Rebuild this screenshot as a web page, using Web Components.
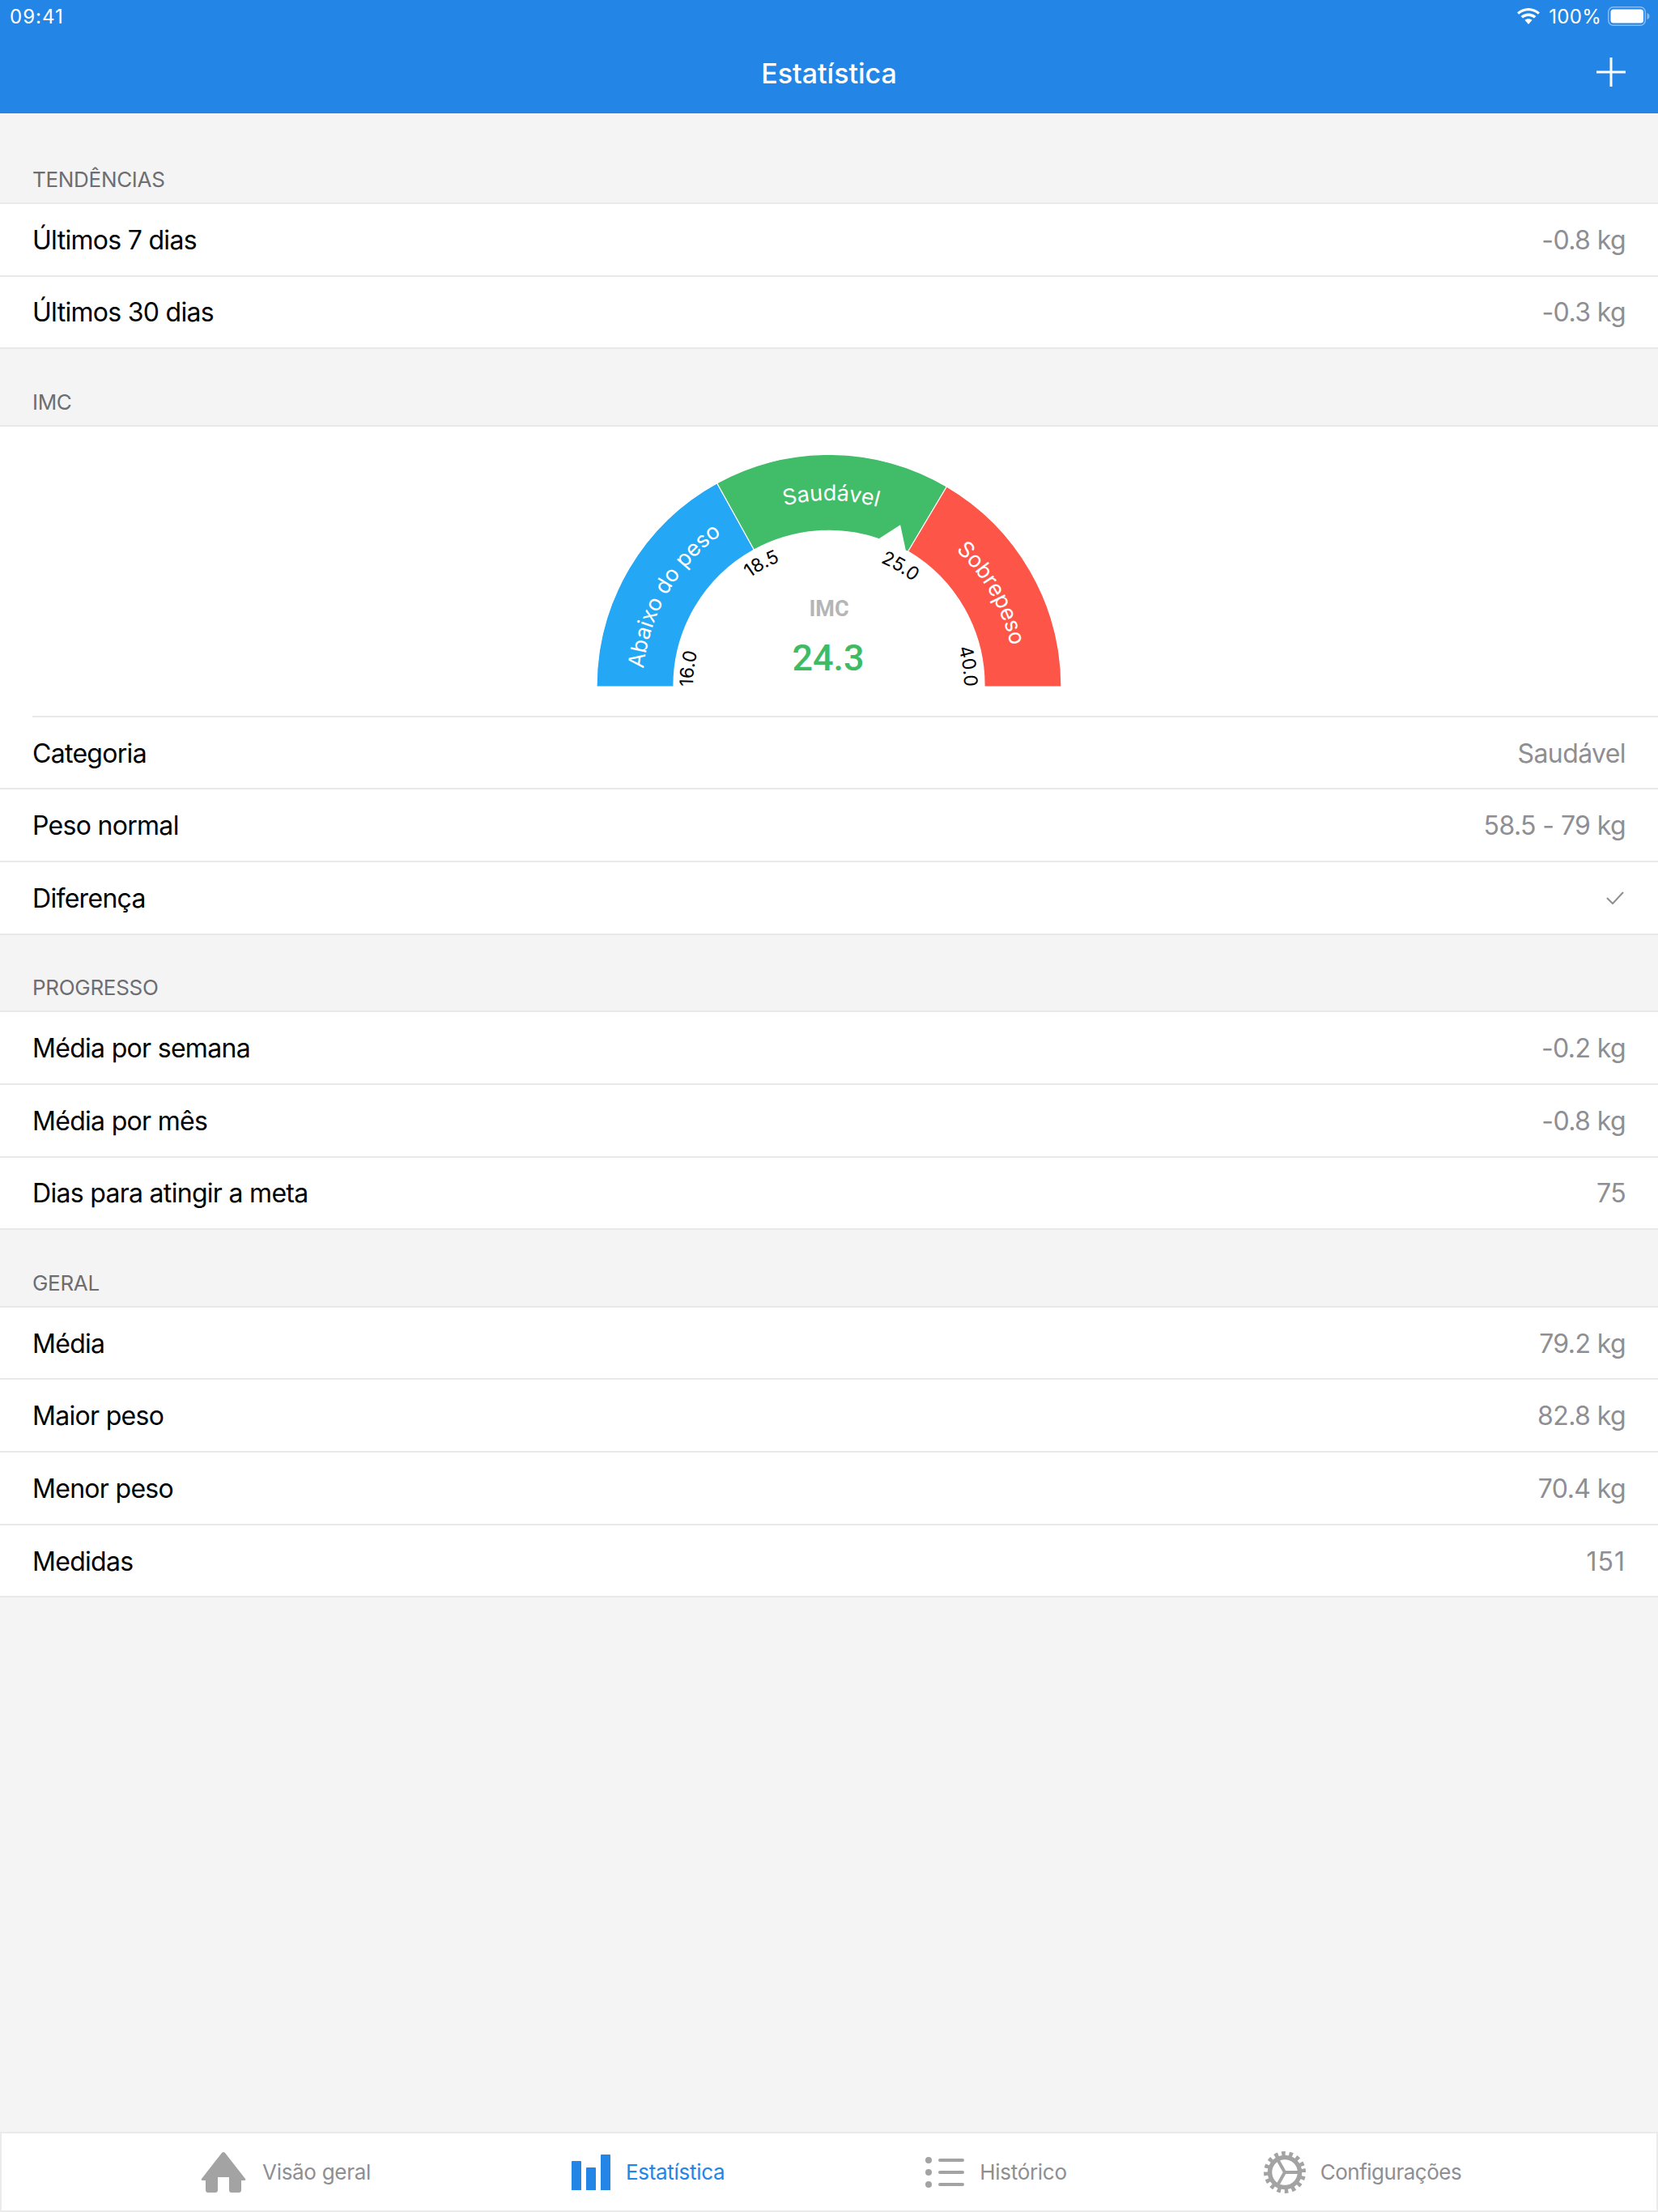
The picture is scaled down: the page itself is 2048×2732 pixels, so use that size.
<!DOCTYPE html>
<html lang="pt">
<head>
<meta charset="utf-8">
<title>Estatística</title>
<style>
  html, body { margin: 0; height: 2732px; }
  body {
    display: flex;
    flex-direction: column;
    background: #f4f4f4;
    font-family: Inter, "Liberation Sans", sans-serif;
    overflow: hidden;
  }
  tab-bar { margin-top: auto; }
</style>
</head>
<body>
  <nav-bar heading="Estatística"></nav-bar>

  <stat-section heading="TENDÊNCIAS" first>
    <stat-row label="Últimos 7 dias" value="-0.8 kg"></stat-row>
    <stat-row label="Últimos 30 dias" value="-0.3 kg" last></stat-row>
  </stat-section>

  <stat-section heading="IMC">
    <bmi-gauge></bmi-gauge>
    <stat-row label="Categoria" value="Saudável"></stat-row>
    <stat-row label="Peso normal" value="58.5 - 79 kg"></stat-row>
    <stat-row label="Diferença" check last></stat-row>
  </stat-section>

  <stat-section heading="PROGRESSO">
    <stat-row label="Média por semana" value="-0.2 kg"></stat-row>
    <stat-row label="Média por mês" value="-0.8 kg"></stat-row>
    <stat-row label="Dias para atingir a meta" value="75" last></stat-row>
  </stat-section>

  <stat-section heading="GERAL">
    <stat-row label="Média" value="79.2 kg"></stat-row>
    <stat-row label="Maior peso" value="82.8 kg"></stat-row>
    <stat-row label="Menor peso" value="70.4 kg"></stat-row>
    <stat-row label="Medidas" value="151" wide last></stat-row>
  </stat-section>

  <tab-bar>
    <tab-item label="Visão geral">
      <svg width="56" height="50" viewBox="0 0 56 50">
        <path fill="#a3a3a3" d="M28 0 Q29 0 30 1 L55 33 Q56 35 54 35 L50 35 L50 47 Q50 50 47 50 L38 50 Q35 50 35 47 L35 31 L21 31 L21 47 Q21 50 18 50 L9 50 Q6 50 6 47 L6 35 L2 35 Q0 35 1 33 L26 1 Q27 0 28 0 Z"/>
      </svg>
    </tab-item>
    <tab-item label="Estatística" active style="gap:19px">
      <svg width="48" height="44" viewBox="0 0 48 44">
        <path fill="#2386e6" d="M0 9 Q0 8 1 8 L11 8 Q12 8 12 9 L12 44 L0 44 Z M18 17 Q18 16 19 16 L29 16 Q30 16 30 17 L30 44 L18 44 Z M36 1 Q36 0 37 0 L47 0 Q48 0 48 1 L48 44 L36 44 Z"/>
      </svg>
    </tab-item>
    <tab-item label="Histórico" style="gap:19px">
      <svg width="48" height="38" viewBox="0 0 48 38">
        <g fill="#a3a3a3">
          <ellipse cx="4" cy="4" rx="4" ry="4"/><ellipse cx="4" cy="19" rx="4" ry="4"/><ellipse cx="4" cy="34" rx="4" ry="4"/>
          <rect x="16" y="2" width="32" height="4" rx="2"/><rect x="16" y="17" width="32" height="4" rx="2"/><rect x="16" y="32" width="32" height="4" rx="2"/>
        </g>
      </svg>
    </tab-item>
    <tab-item label="Configurações" style="margin-left:-5px;gap:18px;letter-spacing:-0.5px">
      <svg width="52" height="52" viewBox="0 0 52 52">
        <g fill="none" stroke="#a3a3a3">
          <circle cx="26" cy="26" r="23" stroke-width="6" stroke-dasharray="4.52 4.51" transform="rotate(-11 26 26)"/>
          <circle cx="26" cy="26" r="18.5" stroke-width="5.5"/>
          <path stroke-width="4" d="M26 26 H44 M26 26 L17 10 M26 26 L17 42"/>
        </g>
      </svg>
    </tab-item>
  </tab-bar>

<script>
class NavBar extends HTMLElement {
  connectedCallback() {
    this.attachShadow({ mode: 'open' }).innerHTML = `
      <style>
        :host { display: block; height: 140px; background: #2386e6; color: #fff; }
        .status {
          height: 40px;
          display: flex;
          align-items: center;
          padding: 0 10px 0 12px;
          font-size: 24px;
        }
        .time { margin-right: auto; letter-spacing: 1px; }
        .pct { margin: 0 8px 0 11px; letter-spacing: 0.3px; }
        .title {
          height: 100px;
          display: grid;
          grid-template-columns: 1fr auto 1fr;
          align-items: center;
          padding: 0 40px;
        }
        h1 { margin: 0; font-size: 34px; font-weight: 500; grid-column: 2; }
        svg { display: block; }
        .plus { justify-self: end; margin-top: -3px; }
      </style>
      <div class="status">
        <span class="time">09:41</span>
        <svg width="28" height="20" viewBox="0 0 28 20">
          <path fill="#fff" d="M14 0 C19.5 0 24.2 2.1 28 5.4 L25.8 7.7 C22.6 5 18.6 3.3 14 3.3 C9.4 3.3 5.4 5 2.2 7.7 L0 5.4 C3.8 2.1 8.5 0 14 0 Z M14 6.6 C17.6 6.6 20.8 7.9 23.4 10 L21 12.4 C19 10.9 16.6 10 14 10 C11.4 10 9 10.9 7 12.4 L4.6 10 C7.2 7.9 10.4 6.6 14 6.6 Z M14 13.2 C15.8 13.2 17.3 13.8 18.6 14.8 L14 20 L9.4 14.8 C10.7 13.8 12.2 13.2 14 13.2 Z"/>
        </svg>
        <span class="pct">100%</span>
        <svg width="52" height="24" viewBox="0 0 52 24">
          <rect x="0.75" y="0.75" width="45.5" height="22.5" rx="6" fill="none" stroke="#fff" stroke-opacity=".45" stroke-width="1.5"/>
          <rect x="3.5" y="3.5" width="40.5" height="17" rx="3.5" fill="#fff"/>
          <path d="M48.5 8 Q51.5 9 51.5 12 Q51.5 15 48.5 16 Z" fill="#fff" fill-opacity=".45"/>
        </svg>
      </div>
      <div class="title">
        <h1>${this.getAttribute('heading')}</h1>
        <svg class="plus" width="36" height="36" viewBox="0 0 36 36">
          <path stroke="#fff" stroke-width="3" d="M0 18 H36 M18 0 V36"/>
        </svg>
      </div>`;
  }
}

class StatSection extends HTMLElement {
  connectedCallback() {
    this.attachShadow({ mode: 'open' }).innerHTML = `
      <style>
        :host { display: block; }
        .head {
          height: ${this.hasAttribute('first') ? 110 : 93.5}px;
          box-sizing: border-box;
          display: flex;
          align-items: flex-end;
          padding: 0 40px 14px;
          font-size: 26px;
          letter-spacing: -0.3px;
          line-height: 28px;
          color: #6d6d72;
        }
        .body { background: #fff; border-top: 2px solid #e9e9ea; }
      </style>
      <div class="head">${this.getAttribute('heading')}</div>
      <div class="body"><slot></slot></div>`;
  }
}

class StatRow extends HTMLElement {
  connectedCallback() {
    const last = this.hasAttribute('last');
    const right = this.hasAttribute('check')
      ? `<svg class="check" width="22" height="16" viewBox="0 0 22 16"><path fill="none" stroke="#8e8e93" stroke-width="2" d="M1 8 L8 15 L21 1"/></svg>`
      : `<span class="value">${this.getAttribute('value')}</span>`;
    this.attachShadow({ mode: 'open' }).innerHTML = `
      <style>
        :host { display: block; padding-left: ${last ? 0 : 40}px; border-bottom: 2px solid #e9e9ea; }
        .row {
          height: 87.67px;
          box-sizing: border-box;
          display: flex;
          align-items: center;
          justify-content: space-between;
          padding: 1px 40px 0 ${last ? 40 : 0}px;
          font-size: 32px;
          letter-spacing: -0.7px;
          color: #000;
        }
        .value { color: #8e8e93; letter-spacing: -0.6px; }
        :host([wide]) .value { letter-spacing: 1px; }
        .check { margin-right: 2px; }
      </style>
      <div class="row"><span>${this.getAttribute('label')}</span>${right}</div>`;
  }
}

class BmiGauge extends HTMLElement {
  connectedCallback() {
    this.attachShadow({ mode: 'open' }).innerHTML = `
      <style>
        :host { display: flex; justify-content: center; height: 357px; margin-left: 40px; border-bottom: 2px solid #e9e9ea; }
        svg { display: block; margin: -1px 0 0 -40px; }
        text { font-family: Inter, "Liberation Sans", sans-serif; }
        .band { fill: #fff; font-size: 27px; }
        .tick { fill: #000; font-size: 23px; letter-spacing: -0.2px; }
        .big { font-family: Roboto, sans-serif; text-anchor: middle; }
      </style>
      <svg width="700" height="357" viewBox="0 0 700 357">
        <defs>
          <path id="a-blue" d="M120 322 A230 230 0 0 1 232 124.5"/>
          <path id="a-green" d="M232 124.5 A230 230 0 0 1 466 123.5"/>
          <path id="a-red" d="M466 123.5 A230 230 0 0 1 580 322"/>
          <path id="a-tick" d="M184 322 A166 166 0 0 1 516 322"/>
        </defs>
        <g stroke="#fff" stroke-width="1.2">
          <path fill="#24a7f5" d="M63 322 A287 287 0 0 1 211.7 70.7 L257.4 153 A192 192 0 0 0 158 322 Z"/>
          <path fill="#41bc68" d="M211.7 70.7 A287 287 0 0 1 495.4 75 L447.7 155 L444.3 154 L437.7 123.3 L412 139.7 A192 192 0 0 0 257.4 153 Z"/>
          <path fill="#fe5549" d="M495.4 75 A287 287 0 0 1 637 322 L542 322 A192 192 0 0 0 447.7 155 Z"/>
        </g>
        <text class="band" text-anchor="middle"><textPath href="#a-blue" startOffset="51%">Abaixo do peso</textPath></text>
        <text class="band" text-anchor="middle"><textPath href="#a-green" startOffset="51.5%">Saudável</textPath></text>
        <text class="band" text-anchor="middle"><textPath href="#a-red" startOffset="50%">Sobrepeso</textPath></text>
        <text class="tick" dy="-2"><textPath href="#a-tick" startOffset="0%">16.0</textPath></text>
        <text class="tick" text-anchor="middle"><textPath href="#a-tick" startOffset="34%">18.5</textPath></text>
        <text class="tick" text-anchor="middle"><textPath href="#a-tick" startOffset="67%">25.0</textPath></text>
        <text class="tick" text-anchor="end" dy="-1"><textPath href="#a-tick" startOffset="100%">40.0</textPath></text>
        <text class="big" x="350" y="235" font-size="27" font-weight="700" fill="#b5b5b5">IMC</text>
        <text class="big" x="349" y="302" font-size="45" font-weight="500" fill="#3fbb64">24.3</text>
      </svg>`;
  }
}

class TabBar extends HTMLElement {
  connectedCallback() {
    this.attachShadow({ mode: 'open' }).innerHTML = `
      <style>
        :host {
          display: flex;
          gap: 248px;
          align-items: center;
          box-sizing: border-box;
          height: 99px;
          padding-left: 246px;
          background: #fff;
          border: 2px solid #ebebeb;
        }
      </style>
      <slot></slot>`;
  }
}

class TabItem extends HTMLElement {
  connectedCallback() {
    const color = this.hasAttribute('active') ? '#2386e6' : '#8e8e93';
    this.attachShadow({ mode: 'open' }).innerHTML = `
      <style>
        :host { display: flex; align-items: center; gap: 20px; font-size: 26px; letter-spacing: -0.3px; color: ${color}; }
      </style>
      <slot></slot>
      <span>${this.getAttribute('label')}</span>`;
  }
}

customElements.define('nav-bar', NavBar);
customElements.define('stat-section', StatSection);
customElements.define('stat-row', StatRow);
customElements.define('bmi-gauge', BmiGauge);
customElements.define('tab-bar', TabBar);
customElements.define('tab-item', TabItem);
</script>
</body>
</html>
